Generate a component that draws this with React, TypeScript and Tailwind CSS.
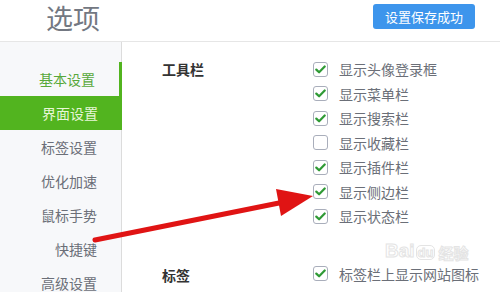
import React from "react";

const font = { fontFamily: '"Microsoft YaHei", "Noto Sans CJK SC", "Noto Sans", sans-serif' };

const menu = ["基本设置", "界面设置", "标签设置", "优化加速", "鼠标手势", "快捷键", "高级设置"];

const toolbar = [
  { label: "显示头像登录框", checked: true },
  { label: "显示菜单栏", checked: true },
  { label: "显示搜索栏", checked: true },
  { label: "显示收藏栏", checked: false },
  { label: "显示插件栏", checked: true },
  { label: "显示侧边栏", checked: true },
  { label: "显示状态栏", checked: true },
];

function Checkbox({ checked }: { checked: boolean }) {
  return (
    <span className="w-[15px] h-[15px] rounded-[3px] border border-[#a9aebb] bg-white flex items-center justify-center shrink-0">
      {checked && (
        <svg width="11" height="9" viewBox="0 0 11 9">
          <path d="M1.3 4.6 L4.1 7.3 L9.7 1.5" fill="none" stroke="#2f9a35" strokeWidth="2.2" strokeLinecap="round" strokeLinejoin="round" />
        </svg>
      )}
    </span>
  );
}

function Row({ label, checked }: { label: string; checked: boolean }) {
  return (
    <div className="h-[24.5px] flex items-center">
      <Checkbox checked={checked} />
      <span className="ml-[11px] text-[14px] text-[#6b6f78] leading-[18px]">{label}</span>
    </div>
  );
}

export default function App() {
  return (
    <div className="relative w-[500px] h-[292px] bg-white overflow-hidden" style={font}>
      {/* Header */}
      <div className="h-[42px] border-b border-[#e6e6e6] flex items-start justify-between pl-[46px] pr-[25px]">
        <span className="text-[27px] text-[#737882] leading-[34px] pt-[1px]">选项</span>
        <button className="h-[25px] w-[102px] mt-[4px] bg-[#3d95ec] rounded-[3px] text-white text-[13px] leading-none">
          设置保存成功
        </button>
      </div>

      <div className="flex h-[250px]">
        {/* Sidebar */}
        <div className="w-[122px] shrink-0 bg-[#f7f8fa] border-r border-[#dcdcdc] pt-[20px]">
          {menu.map((m, i) => (
            <div
              key={m}
              className={`h-[34px] flex items-center justify-end pr-[24px] text-[14px] ${
                i === 1
                  ? "bg-[#52b41f] text-[#e8f7d8] -mr-px"
                  : i === 0
                  ? "text-[#58a83a] border-r-[3px] border-[#52b41f] pr-[21px] -mr-px"
                  : "text-[#6b6f78]"
              }`}
            >
              {m}
            </div>
          ))}
        </div>

        {/* Content */}
        <div className="flex-1 pl-[40px] pt-[15px]">
          <div className="flex">
            <div className="w-[151px] h-[24.5px] flex items-center text-[14px] font-bold text-[#333]">工具栏</div>
            <div>
              {toolbar.map((t) => (
                <Row key={t.label} label={t.label} checked={t.checked} />
              ))}
            </div>
          </div>
          <div className="flex mt-[33px]">
            <div className="w-[151px] h-[24.5px] flex items-center text-[14px] font-bold text-[#333] pt-[3px]">标签</div>
            <div>
              <Row label="标签栏上显示网站图标" checked={true} />
            </div>
          </div>
        </div>
      </div>

      {/* Baidu watermark */}
      <div className="absolute left-[385px] top-[241px] flex items-end gap-[1px] pointer-events-none">
        <span className="text-[19px] font-bold text-white leading-none" style={{ fontFamily: "Arial, 'Liberation Sans', sans-serif", WebkitTextStroke: "1px #e4e4e4" }}>
          Bai
        </span>
        <span className="text-[13px] font-bold text-white leading-none border border-[#e4e4e4] rounded-[5px] px-[1px]" style={{ fontFamily: "Arial, 'Liberation Sans', sans-serif", WebkitTextStroke: "1px #e4e4e4" }}>
          du
        </span>
        <span className="text-[15px] font-bold text-white leading-none ml-[2px]" style={{ WebkitTextStroke: "1px #e4e4e4" }}>
          经验
        </span>
      </div>

      {/* Red arrow */}
      <svg className="absolute inset-0 pointer-events-none" width="500" height="292">
        <line x1="95" y1="240" x2="284" y2="202" stroke="#e01414" strokeWidth="5" strokeLinecap="round" />
        <polygon points="313,196 276,189 281,216" fill="#e01414" />
      </svg>
    </div>
  );
}
